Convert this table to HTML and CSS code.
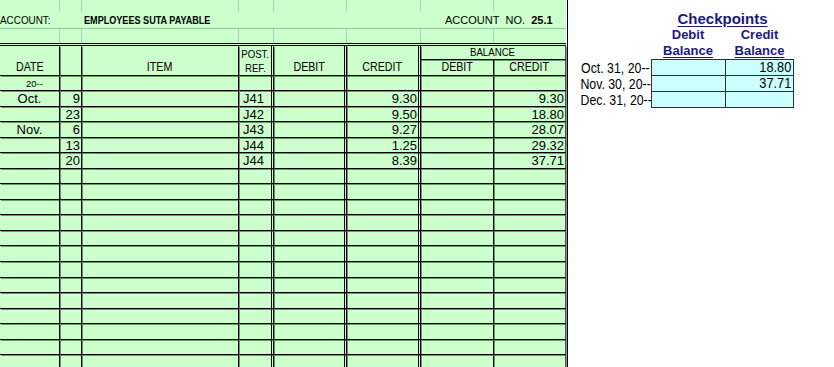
FILE: index.html
```html
<!DOCTYPE html>
<html>
<head>
<meta charset="utf-8">
<link rel="stylesheet" href="styles.css">
</head>
<body>
<div class="page">
  <div class="ledger">
    <div class="top">
      <div class="f"></div><div class="f"></div><div class="f"></div><div class="f"></div><div class="f"></div><div class="f"></div><div class="f"></div><div class="f end"></div>
      <div class="acct-label"><span class="sx sl">ACCOUNT:</span></div>
      <div class="acct-name"><span class="sx sn">EMPLOYEES SUTA PAYABLE</span></div>
      <div class="acct-no">ACCOUNT&nbsp; NO.&nbsp; <b>25.1</b></div>
      <div class="f"></div><div class="f"></div><div class="f"></div><div class="f"></div><div class="f"></div><div class="f"></div><div class="f"></div><div class="f end"></div>
    </div>
    <div class="grid">
      <div class="c h hd-date"><span class="sx sh">DATE</span></div>
      <div class="c h hd-day"></div>
      <div class="c h hd-item"><span class="sx sh">ITEM</span></div>
      <div class="c h hd-ref d"><span class="sm sx ss">POST.</span><span class="sm sx ss">REF.</span></div>
      <div class="c h hd-dr d"><span class="sx sh">DEBIT</span></div>
      <div class="c h hd-cr d"><span class="sx sh">CREDIT</span></div>
      <div class="c h hd-bal last"><span class="sm sx ss">BALANCE</span></div>
      <div class="c h hd-bdr"><span class="sx sh">DEBIT</span></div>
      <div class="c h hd-bcr last"><span class="sx sh">CREDIT</span></div>

      <div class="c yr"><span class="yrt">20--</span></div><div class="c"></div><div class="c"></div><div class="c d"></div><div class="c d"></div><div class="c d"></div><div class="c"></div><div class="c last"></div>

      <div class="c m">Oct.</div><div class="c n">9</div><div class="c"></div><div class="c r d">J41</div><div class="c n d"></div><div class="c n d">9.30</div><div class="c n"></div><div class="c n last">9.30</div>
      <div class="c m"></div><div class="c n">23</div><div class="c"></div><div class="c r d">J42</div><div class="c n d"></div><div class="c n d">9.50</div><div class="c n"></div><div class="c n last">18.80</div>
      <div class="c m">Nov.</div><div class="c n">6</div><div class="c"></div><div class="c r d">J43</div><div class="c n d"></div><div class="c n d">9.27</div><div class="c n"></div><div class="c n last">28.07</div>
      <div class="c m"></div><div class="c n">13</div><div class="c"></div><div class="c r d">J44</div><div class="c n d"></div><div class="c n d">1.25</div><div class="c n"></div><div class="c n last">29.32</div>
      <div class="c m"></div><div class="c n">20</div><div class="c"></div><div class="c r d">J44</div><div class="c n d"></div><div class="c n d">8.39</div><div class="c n"></div><div class="c n last">37.71</div>

      <div class="c"></div><div class="c"></div><div class="c"></div><div class="c d"></div><div class="c d"></div><div class="c d"></div><div class="c"></div><div class="c last"></div>
      <div class="c"></div><div class="c"></div><div class="c"></div><div class="c d"></div><div class="c d"></div><div class="c d"></div><div class="c"></div><div class="c last"></div>
      <div class="c"></div><div class="c"></div><div class="c"></div><div class="c d"></div><div class="c d"></div><div class="c d"></div><div class="c"></div><div class="c last"></div>
      <div class="c"></div><div class="c"></div><div class="c"></div><div class="c d"></div><div class="c d"></div><div class="c d"></div><div class="c"></div><div class="c last"></div>
      <div class="c"></div><div class="c"></div><div class="c"></div><div class="c d"></div><div class="c d"></div><div class="c d"></div><div class="c"></div><div class="c last"></div>
      <div class="c"></div><div class="c"></div><div class="c"></div><div class="c d"></div><div class="c d"></div><div class="c d"></div><div class="c"></div><div class="c last"></div>
      <div class="c"></div><div class="c"></div><div class="c"></div><div class="c d"></div><div class="c d"></div><div class="c d"></div><div class="c"></div><div class="c last"></div>
      <div class="c"></div><div class="c"></div><div class="c"></div><div class="c d"></div><div class="c d"></div><div class="c d"></div><div class="c"></div><div class="c last"></div>
      <div class="c"></div><div class="c"></div><div class="c"></div><div class="c d"></div><div class="c d"></div><div class="c d"></div><div class="c"></div><div class="c last"></div>
      <div class="c"></div><div class="c"></div><div class="c"></div><div class="c d"></div><div class="c d"></div><div class="c d"></div><div class="c"></div><div class="c last"></div>
      <div class="c"></div><div class="c"></div><div class="c"></div><div class="c d"></div><div class="c d"></div><div class="c d"></div><div class="c"></div><div class="c last"></div>
      <div class="c"></div><div class="c"></div><div class="c"></div><div class="c d"></div><div class="c d"></div><div class="c d"></div><div class="c"></div><div class="c last"></div>
      <div class="c"></div><div class="c"></div><div class="c"></div><div class="c d"></div><div class="c d"></div><div class="c d"></div><div class="c"></div><div class="c last"></div>
    </div>
  </div>

  <div class="checks">
    <div class="cp-title"><span class="u">Checkpoints</span></div>
    <div class="cp-h1 col1">Debit</div>
    <div class="cp-h1 col2">Credit</div>
    <div class="cp-h2 col1"><span class="u">Balance</span></div>
    <div class="cp-h2 col2"><span class="u">Balance</span></div>

    <div class="cp-lbl"><span class="sx sr">Oct. 31, 20--</span></div>
    <div class="box b1"></div>
    <div class="box b2"><span class="sx sv">18.80</span></div>
    <div class="cp-lbl"><span class="sx sr">Nov. 30, 20--</span></div>
    <div class="box b1"></div>
    <div class="box b2"><span class="sx sv">37.71</span></div>
    <div class="cp-lbl"><span class="sx sr">Dec. 31, 20--</span></div>
    <div class="box b1 bl"></div>
    <div class="box b2 bl"></div>
  </div>
</div>
</body>
</html>
```

FILE: styles.css
```css
:root {
  --cols: 60px 22px 157px 35px 73px 74px 73px 72px;
}

* { box-sizing: border-box; }

body {
  margin: 0;
  background: #ffffff;
  font-family: "Liberation Sans", Arial, sans-serif;
  color: #000;
}

.page {
  display: flex;
  align-items: flex-start;
  height: 367px;
  overflow: hidden;
}

/* horizontal compression helpers (the sheet renders condensed text) */
.sx { display: inline-block; white-space: nowrap; }
.sl { transform: scaleX(0.86); transform-origin: left center; }
.sn { transform: scaleX(0.79); transform-origin: left center; }
.sh { transform: scaleX(0.82); transform-origin: center; }
.ss { transform: scaleX(0.92); transform-origin: center; }
.sr { transform: scaleX(0.85); transform-origin: right center; }
.sv { transform: scaleX(0.88); transform-origin: right center; }

.ledger {
  flex: none;
  width: 568px;
  height: 367px;
  background: #ccffcc;
  background-clip: content-box;
  padding-right: 1px;
  border-right: 1px solid #000;
  overflow: hidden;
}

/* ---------- top (account) area ---------- */
.top {
  display: grid;
  grid-template-columns: var(--cols);
  grid-template-rows: 12px 17px 14px;
}

.f {
  border-right: 1px solid #b2d4b2;
}
.f.end { border-right: none; }

.acct-label,
.acct-name,
.acct-no {
  grid-row: 2;
  border-bottom: 1px solid #9fc09f;
  font-size: 11.5px;
  line-height: 17px;
  white-space: nowrap;
}
.acct-label { grid-column: 1 / 3; }
.acct-name { grid-column: 3 / 7; padding-left: 2px; font-weight: bold; }
.acct-no { grid-column: 7 / 9; padding-left: 24px; font-size: 11px; }
.acct-no b { font-weight: bold; }

/* ---------- ledger grid ---------- */
.grid {
  display: grid;
  grid-template-columns: var(--cols);
  grid-template-rows: 14px 16px 15px;
  grid-auto-rows: 15.56px;
  border-top: 3px double #000;
}

.c {
  border-right: 1px solid #000;
  border-bottom: 1px solid #000;
  box-shadow: 1px 1px 0 rgba(30, 70, 30, 0.55);
  font-size: 13px;
  line-height: 14px;
  white-space: nowrap;
  overflow: hidden;
}
.c.d { border-right: 3px double #000; }
.c.last { border-right: 1px solid #3d5c3d; }

.h {
  display: flex;
  flex-direction: column;
  justify-content: flex-end;
  align-items: center;
  font-size: 13px;
  line-height: 14px;
  padding-bottom: 1px;
}
.hd-date { grid-column: 1; grid-row: 1 / 3; }
.hd-day { grid-column: 2; grid-row: 1 / 3; }
.hd-item { grid-column: 3; grid-row: 1 / 3; }
.hd-ref { grid-column: 4; grid-row: 1 / 3; justify-content: space-between; padding-top: 1px; }
.hd-dr { grid-column: 5; grid-row: 1 / 3; }
.hd-cr { grid-column: 6; grid-row: 1 / 3; }
.hd-bal { grid-column: 7 / 9; grid-row: 1; padding-bottom: 0; }
.hd-bdr { grid-column: 7; grid-row: 2; }
.hd-bcr { grid-column: 8; grid-row: 2; }

.sm { font-size: 10.5px; line-height: 13px; }
.hd-ref .sm { line-height: 14px; }

.yr { text-align: center; padding-left: 10px; }
.yrt { font-size: 9.5px; line-height: 15px; }

.m { text-align: center; padding-top: 1px; }
.n { text-align: right; padding-right: 1px; padding-top: 1px; }
.r { text-align: center; padding-top: 1px; padding-right: 3px; }

/* ---------- checkpoints panel ---------- */
.checks {
  flex: none;
  display: grid;
  grid-template-columns: 83px 74px 69px;
  grid-template-rows: 17px 16px 16px 16px 16px 17px;
  padding-top: 10px;
}

.cp-title {
  grid-column: 2 / 4;
  text-align: center;
  color: #1a1a7e;
  font-weight: bold;
  font-size: 15px;
  line-height: 17px;
}
.cp-h1, .cp-h2 {
  text-align: center;
  color: #1a1a7e;
  font-weight: bold;
  font-size: 13px;
  line-height: 16px;
}
.col1 { grid-column: 2; }
.col2 { grid-column: 3; }
.u { text-decoration: underline; text-underline-offset: 2px; }

.cp-lbl {
  grid-column: 1;
  text-align: right;
  padding-right: 1px;
  font-size: 14.5px;
  line-height: 16px;
  padding-top: 1px;
  white-space: nowrap;
}

.box {
  background: #ccffff;
  border-top: 1px solid #2e2e2e;
  border-left: 1px solid #2e2e2e;
  font-size: 14.5px;
  line-height: 15px;
  text-align: right;
  padding-right: 2px;
}
.box.b2 { border-right: 1px solid #2e2e2e; }
.box.bl { border-bottom: 1px solid #2e2e2e; }
```
